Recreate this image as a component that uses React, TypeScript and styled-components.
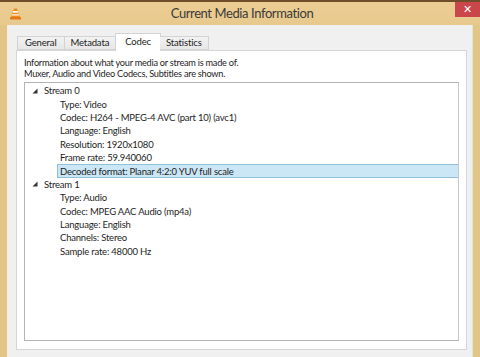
import React from 'react';
import styled, { createGlobalStyle } from 'styled-components';

const GlobalStyle = createGlobalStyle`
  html, body {
    margin: 0;
    padding: 0;
    background: #5b3d1e;
  }
  body {
    font-family: Lato, "Open Sans", sans-serif;
    color: #1e1e1e;
  }
`;

const Window = styled.div`
  width: 480px;
  height: 357px;
  overflow: hidden;
  display: flex;
  flex-direction: column;
  border-top: 2px solid #6e4e2a;
  box-sizing: border-box;
  background: #ebcd93;
`;

const TitleBar = styled.div`
  height: 23px;
  flex: 0 0 23px;
  display: grid;
  grid-template-columns: 1fr auto 1fr;
  align-items: start;
  background: linear-gradient(#ebcd93, #e8c98d);
`;

const IconSlot = styled.div`
  padding: 6px 0 0 10px;
  display: flex;
`;

const Title = styled.div`
  font-size: 13px;
  line-height: 22px;
  color: #3a3a3a;
  letter-spacing: -0.4px;
  padding-left: 4px;
`;

const CloseSlot = styled.div`
  display: flex;
  justify-content: flex-end;
`;

const CloseButton = styled.div`
  width: 25px;
  height: 15px;
  background: #c9464a;
  color: #fff;
  font-size: 11px;
  line-height: 15px;
  text-align: center;
  font-family: "DejaVu Sans", sans-serif;
`;

const Body = styled.div`
  flex: 1;
  display: flex;
  flex-direction: column;
  background: #f0f0f0;
  border-left: 7px solid #e4c588;
  border-right: 7px solid #e4c588;
  box-shadow: inset 1px 0 0 #f7eedd, inset -1px 0 0 #dfe6dc;
  padding: 8px 6px 0 9px;
`;

const TabRow = styled.div`
  display: flex;
  align-items: flex-end;
  height: 17px;
  padding-left: 1px;
  position: relative;
  z-index: 1;
`;

const Tab = styled.div<{ $active?: boolean }>`
  box-sizing: border-box;
  height: ${p => (p.$active ? '18px' : '14px')};
  margin-bottom: ${p => (p.$active ? '-1px' : '0')};
  padding: 0 ${p => (p.$active ? '9px' : '6px')};
  margin-left: ${p => (p.$active ? '-1px' : '0')};
  margin-right: ${p => (p.$active ? '-1px' : '0')};
  border: 1px solid #d3d3d3;
  border-bottom: ${p => (p.$active ? 'none' : '1px solid #d3d3d3')};
  border-left-width: ${p => (p.$active ? '1px' : '0')};
  &:first-child {
    border-left-width: 1px;
    padding: 0 7px;
  }
  background: ${p => (p.$active ? '#fff' : 'linear-gradient(#f2f2f2, #e7e7e7)')};
  font-size: 9.5px;
  letter-spacing: -0.15px;
  line-height: ${p => (p.$active ? '15px' : '12px')};
  color: #222;
`;

const Pane = styled.div`
  height: 300px;
  box-sizing: border-box;
  background: #fff;
  border: 1px solid #d6d6d6;
  padding: 6px 7px 8px 7px;
  display: flex;
  flex-direction: column;
`;

const Intro = styled.p`
  margin: 0 0 3px 0;
  font-size: 9.2px;
  letter-spacing: -0.25px;
  line-height: 11px;
  color: #1e1e1e;
`;

const TreeBox = styled.div`
  flex: 1;
  border: 1px solid #b4b4b4;
  border-right-color: #c8c8c8;
  padding-top: 1px;
`;

const Row = styled.div<{ $level: number; $selected?: boolean }>`
  display: flex;
  align-items: center;
  height: 13.4px;
  box-sizing: border-box;
  margin-left: ${p => (p.$level === 0 ? 6 : 32)}px;
  padding-left: ${p => (p.$level === 0 ? 0 : 2)}px;
  font-size: 9.5px;
  letter-spacing: -0.2px;
  color: #1e1e1e;
  white-space: nowrap;
  background: ${p => (p.$selected ? '#cbe6f5' : 'transparent')};
  border: 1px solid ${p => (p.$selected ? '#93c1da' : 'transparent')};
  border-right: none;
`;

const Arrow = styled.svg`
  width: 6px;
  height: 6px;
  margin-right: 6px;
  flex: 0 0 6px;
`;

const VlcIcon = () => (
  <svg width="11" height="12" viewBox="0 0 11 12">
    <path d="M4 0.5 L7 0.5 L10 9 L1 9 Z" fill="#f08a1c" />
    <path d="M3.2 3 L7.8 3 L8.4 4.8 L2.6 4.8 Z" fill="#fff" />
    <path d="M2.2 6.2 L8.8 6.2 L9.3 7.6 L1.7 7.6 Z" fill="#fff" />
    <rect x="0" y="9" width="11" height="2.5" rx="0.6" fill="#e2781a" />
  </svg>
);

type Item = { label: string; selected?: boolean };

const streams: { name: string; items: Item[] }[] = [
  {
    name: 'Stream 0',
    items: [
      { label: 'Type: Video' },
      { label: 'Codec: H264 - MPEG-4 AVC (part 10) (avc1)' },
      { label: 'Language: English' },
      { label: 'Resolution: 1920x1080' },
      { label: 'Frame rate: 59.940060' },
      { label: 'Decoded format: Planar 4:2:0 YUV full scale', selected: true },
    ],
  },
  {
    name: 'Stream 1',
    items: [
      { label: 'Type: Audio' },
      { label: 'Codec: MPEG AAC Audio (mp4a)' },
      { label: 'Language: English' },
      { label: 'Channels: Stereo' },
      { label: 'Sample rate: 48000 Hz' },
    ],
  },
];

const tabs = ['General', 'Metadata', 'Codec', 'Statistics'];

export default function App() {
  return (
    <>
      <GlobalStyle />
      <Window>
        <TitleBar>
          <IconSlot>
            <VlcIcon />
          </IconSlot>
          <Title>Current Media Information</Title>
          <CloseSlot>
            <CloseButton>✕</CloseButton>
          </CloseSlot>
        </TitleBar>
        <Body>
          <TabRow>
            {tabs.map(t => (
              <Tab key={t} $active={t === 'Codec'}>{t}</Tab>
            ))}
          </TabRow>
          <Pane>
            <Intro>
              Information about what your media or stream is made of.
              <br />
              Muxer, Audio and Video Codecs, Subtitles are shown.
            </Intro>
            <TreeBox>
              {streams.map(s => (
                <React.Fragment key={s.name}>
                  <Row $level={0}>
                    <Arrow viewBox="0 0 6 6">
                      <path d="M5.5 0.5 L5.5 5.5 L0.5 5.5 Z" fill="#333" />
                    </Arrow>
                    {s.name}
                  </Row>
                  {s.items.map(i => (
                    <Row key={i.label} $level={1} $selected={i.selected}>
                      {i.label}
                    </Row>
                  ))}
                </React.Fragment>
              ))}
            </TreeBox>
          </Pane>
        </Body>
      </Window>
    </>
  );
}
